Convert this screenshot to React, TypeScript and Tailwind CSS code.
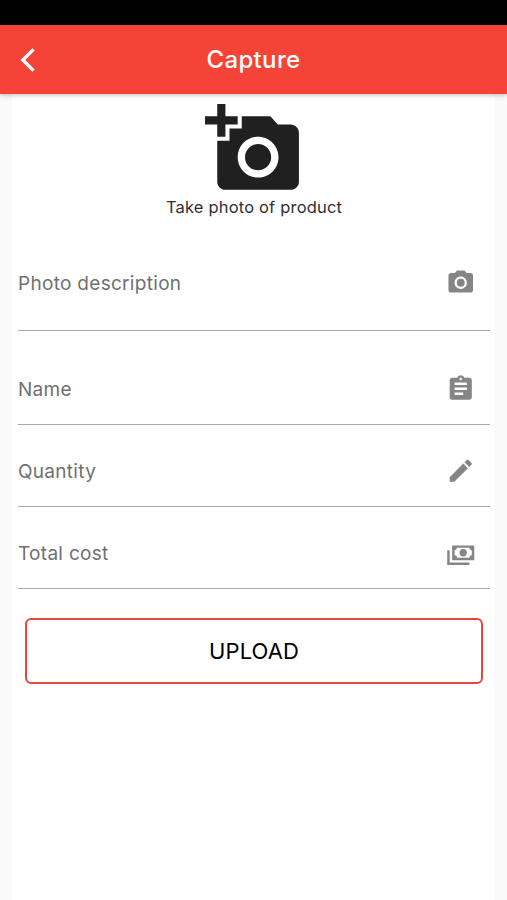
import type { ReactNode } from "react";
import { MdAddAPhoto, MdAssignment, MdCameraAlt, MdEdit } from "react-icons/md";

function BackIcon() {
  return (
    <svg width="16" height="26" viewBox="0 0 16 26" fill="none" stroke="currentColor" strokeWidth="3.4">
      <path d="M13.5 2.4L2.8 13L13.5 23.6" />
    </svg>
  );
}

function CashIcon() {
  return (
    <svg width="29.5" height="29.5" viewBox="0 0 24 24" fill="currentColor">
      <path d="M5 6h18v12H5V6m9 3a3 3 0 0 1 3 3a3 3 0 0 1-3 3a3 3 0 0 1-3-3a3 3 0 0 1 3-3M9 8a2 2 0 0 1-2 2v4a2 2 0 0 1 2 2h10a2 2 0 0 1 2-2v-4a2 2 0 0 1-2-2H9M1 10h2v10h16v2H1V10z" />
    </svg>
  );
}

function Field({ label, icon, className }: { label: string; icon: ReactNode; className: string }) {
  return (
    <div className={`flex items-start justify-between border-b border-[#a8a8a8] pr-[15px] ${className}`}>
      <span className="text-[19px] leading-[32px] tracking-[0.3px] text-[#707070]">{label}</span>
      <span className="text-[#858585]">{icon}</span>
    </div>
  );
}

function TopBar() {
  return (
    <header className="relative z-10 bg-black pt-[25px]">
      <div className="grid h-[69px] grid-cols-[1fr_auto_1fr] items-center bg-[#f54437] text-white shadow-[0_1px_5px_rgba(0,0,0,0.25)]">
        <button className="justify-self-start pl-5" aria-label="Back">
          <BackIcon />
        </button>
        <h1 className="text-[24px] font-medium tracking-[0.35px]">Capture</h1>
      </div>
    </header>
  );
}

export default function App() {
  return (
    <div className="flex h-[900px] w-[507px] flex-col overflow-hidden bg-[#fafafa] font-['Inter',sans-serif]">
      <TopBar />
      <main className="ml-3 mr-[13px] flex-1 bg-white">
        <div className="flex h-[154px] flex-col items-center pt-1.5">
          <MdAddAPhoto size={98} className="ml-[2px] text-[#202020]" />
          <p className="-mt-px ml-[2px] text-[16.5px] leading-5 tracking-[0.18px] text-[#303030]">Take photo of product</p>
        </div>
        <form className="ml-1.5 mr-1">
          <Field label="Photo description" icon={<MdCameraAlt size={29.5} />} className="h-[83px] pt-5" />
          <Field label="Name" icon={<MdAssignment size={29.5} />} className="h-[94px] pt-[43px]" />
          <Field label="Quantity" icon={<MdEdit size={29.5} />} className="h-[82px] pt-[31px]" />
          <Field label="Total cost" icon={<CashIcon />} className="h-[82px] pt-[31px]" />
          <button
            type="button"
            className="ml-[7px] mt-[29px] h-[66px] w-[458px] rounded-md border-2 border-[#e8453c] text-[22px] tracking-[0.1px] text-black"
          >
            UPLOAD
          </button>
        </form>
      </main>
    </div>
  );
}
